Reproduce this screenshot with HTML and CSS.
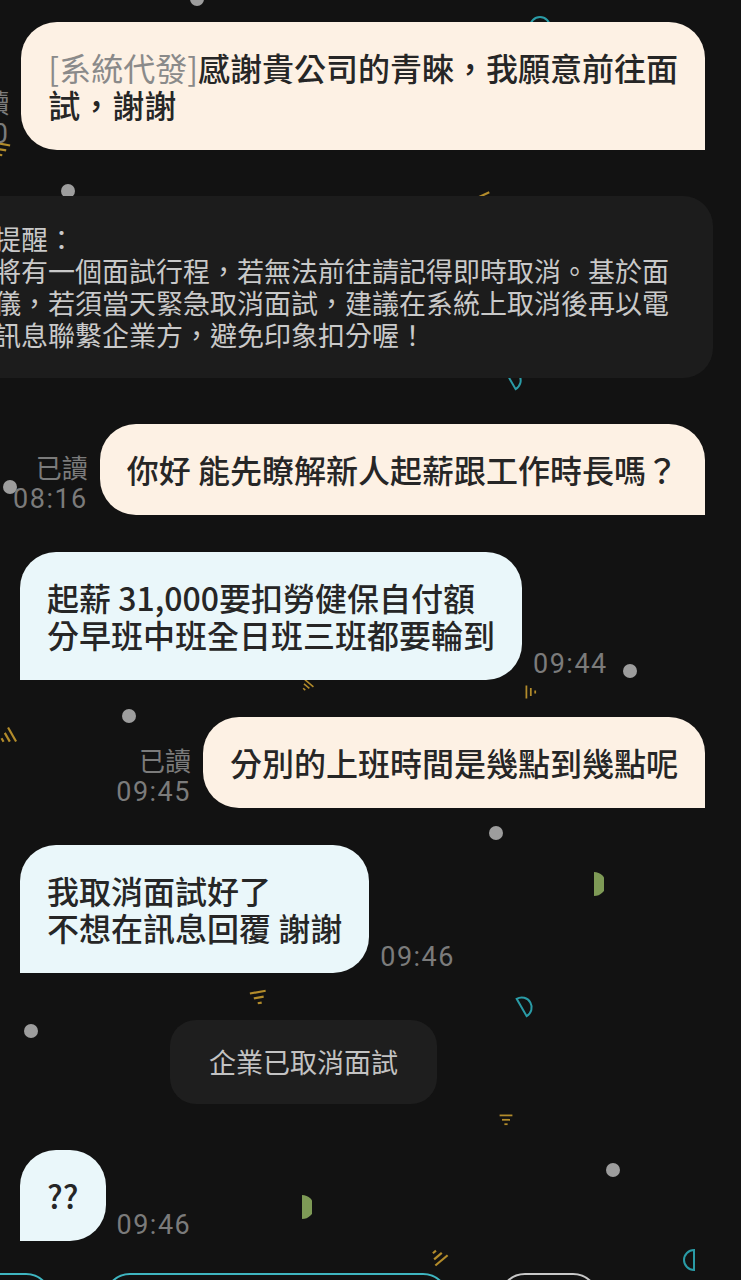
FILE: index.html
```html
<!DOCTYPE html>
<html lang="zh-Hant">
<head>
    <meta charset="UTF-8">
    <meta name="viewport" content="width=device-width, initial-scale=1.0">
    <title>聊天室</title>
    <link rel="stylesheet" href="styles.css">
</head>
<body>
    <!-- background confetti -->
    <div class="confetti">
        <div class="dot d1"></div>
        <div class="dot d2"></div>
        <div class="dot d3"></div>
        <div class="dot d4"></div>
        <div class="dot d5"></div>
        <div class="dot d6"></div>
        <div class="dot d7"></div>
        <div class="dot d8"></div>

        <svg class="tri t1" viewBox="0 0 20 20"><g><line x1="2" y1="3" x2="18" y2="3"/><line x1="5" y1="8.5" x2="15" y2="8.5"/><line x1="8" y1="14" x2="12" y2="14"/></g></svg>
        <svg class="tri t2" viewBox="0 0 20 20"><g><line x1="2" y1="3" x2="18" y2="3"/><line x1="5" y1="8.5" x2="15" y2="8.5"/><line x1="8" y1="14" x2="12" y2="14"/></g></svg>
        <svg class="tri t3" viewBox="0 0 20 20"><g><line x1="2" y1="3" x2="18" y2="3"/><line x1="5" y1="8.5" x2="15" y2="8.5"/><line x1="8" y1="14" x2="12" y2="14"/></g></svg>
        <svg class="tri t4" viewBox="0 0 20 20"><g><line x1="2" y1="3" x2="18" y2="3"/><line x1="5" y1="8.5" x2="15" y2="8.5"/><line x1="8" y1="14" x2="12" y2="14"/></g></svg>
        <svg class="tri t5" viewBox="0 0 20 20"><g><line x1="2" y1="3" x2="18" y2="3"/><line x1="5" y1="8.5" x2="15" y2="8.5"/><line x1="8" y1="14" x2="12" y2="14"/></g></svg>
        <svg class="tri t6" viewBox="0 0 20 20"><g><line x1="2" y1="3" x2="18" y2="3"/><line x1="5" y1="8.5" x2="15" y2="8.5"/><line x1="8" y1="14" x2="12" y2="14"/></g></svg>
        <svg class="tri t7" viewBox="0 0 20 20"><g><line x1="2" y1="3" x2="18" y2="3"/><line x1="5" y1="8.5" x2="15" y2="8.5"/><line x1="8" y1="14" x2="12" y2="14"/></g></svg>
        <svg class="tri t8" viewBox="0 0 20 20"><g><line x1="2" y1="3" x2="18" y2="3"/><line x1="5" y1="8.5" x2="15" y2="8.5"/><line x1="8" y1="14" x2="12" y2="14"/></g></svg>
        <svg class="tri t9" viewBox="0 0 20 20"><g><line x1="2" y1="3" x2="18" y2="3"/><line x1="5" y1="8.5" x2="15" y2="8.5"/><line x1="8" y1="14" x2="12" y2="14"/></g></svg>

        <svg class="moon s1" viewBox="0 0 14 24"><path d="M2 2 A10 10 0 0 1 2 22 Z"/></svg>
        <svg class="moon s2" viewBox="0 0 14 24"><path d="M2 2 A10 10 0 0 1 2 22 Z"/></svg>
        <svg class="moon s3" viewBox="0 0 14 24"><path d="M2 2 A10 10 0 0 1 2 22 Z"/></svg>
        <svg class="moon s4" viewBox="0 0 14 24"><path d="M2 2 A10 10 0 0 1 2 22 Z"/></svg>

        <svg class="half g1" viewBox="0 0 10 24"><path d="M0 0 A12 12 0 0 1 0 24 Z"/></svg>
        <svg class="half g2" viewBox="0 0 10 24"><path d="M0 0 A12 12 0 0 1 0 24 Z"/></svg>
    </div>

    <main class="chat">
        <div class="row sent">
            <div class="meta"><span>已讀</span><span class="time">09:40</span></div>
            <div class="bubble mine"><span class="sys-tag">[系統代發]</span>感謝貴公司的青睞，我願意前往面<br>試，謝謝</div>
        </div>

        <div class="notice">
            溫馨提醒：<br>
            您即將有一個面試行程，若無法前往請記得即時取消。基於面<br>試禮儀，若須當天緊急取消面試，建議在系統上取消後再以電<br>話或訊息聯繫企業方，避免印象扣分喔！
        </div>

        <div class="row sent">
            <div class="meta"><span>已讀</span><span class="time">08:16</span></div>
            <div class="bubble mine">你好 能先瞭解新人起薪跟工作時長嗎？</div>
        </div>

        <div class="row received">
            <div class="bubble theirs">起薪 31,000要扣勞健保自付額<br>分早班中班全日班三班都要輪到</div>
            <div class="meta"><span class="time">09:44</span></div>
        </div>

        <div class="row sent">
            <div class="meta"><span>已讀</span><span class="time">09:45</span></div>
            <div class="bubble mine">分別的上班時間是幾點到幾點呢</div>
        </div>

        <div class="row received">
            <div class="bubble theirs">我取消面試好了<br>不想在訊息回覆 謝謝</div>
            <div class="meta"><span class="time">09:46</span></div>
        </div>

        <div class="pill">企業已取消面試</div>

        <div class="row received">
            <div class="bubble theirs">??</div>
            <div class="meta"><span class="time">09:46</span></div>
        </div>

        <div class="actions">
            <div class="action teal small"></div>
            <div class="action teal wide"></div>
            <div class="action grey small"></div>
        </div>
    </main>
</body>
</html>
```

FILE: styles.css
```css
body {
    margin: 0;
    height: 1280px;
    position: relative;
    overflow: hidden;
    background-color: #121212;
    font-family: "Noto Sans CJK TC", "Noto Sans", sans-serif;
    color: #262626;
}

/* Confetti layer */
.confetti {
    position: absolute;
    top: 0;
    left: 0;
    width: 100%;
    height: 100%;
    z-index: 0;
}

.confetti > * {
    position: absolute;
}

.dot {
    width: 14px;
    height: 14px;
    border-radius: 50%;
    background-color: #9d9d9d;
}

.d1 { left: 190px; top: -8px; }
.d2 { left: 61px; top: 184px; }
.d3 { left: 3px; top: 480px; }
.d4 { left: 623px; top: 664px; }
.d5 { left: 122px; top: 709px; }
.d6 { left: 489px; top: 826px; }
.d7 { left: 24px; top: 1024px; }
.d8 { left: 606px; top: 1163px; }

.tri {
    width: 20px;
    height: 20px;
}

.tri line {
    stroke: #b38c2b;
    stroke-width: 2.2;
}

.t1 { left: 475px; top: 192px; transform: rotate(-25deg); }
.t2 { left: -9px; top: 141px; transform: rotate(10deg); }
.t3 { left: 296px; top: 677px; transform: rotate(40deg) scale(0.7); }
.t4 { left: 522px; top: 682px; transform: rotate(-90deg) scale(0.8); }
.t5 { left: -4px; top: 728px; transform: rotate(60deg); }
.t6 { left: 249px; top: 989px; transform: rotate(-10deg); }
.t7 { left: 496px; top: 1111px; transform: scale(0.8); }
.t8 { left: 427px; top: 1245px; transform: rotate(140deg); }
.t9 { left: 549px; top: 211px; transform: scale(0.6); opacity: 0.45; }

.moon {
    width: 14px;
    height: 24px;
}

.moon path {
    fill: none;
    stroke: #2a9ba6;
    stroke-width: 2;
}

.s1 { left: 533px; top: 10px; transform: rotate(-90deg); }
.s2 { left: 508px; top: 366px; transform: rotate(-30deg); }
.s3 { left: 519px; top: 993px; transform: rotate(-30deg); }
.s4 { left: 682px; top: 1248px; transform: rotate(180deg); }

.half {
    width: 10px;
    height: 24px;
}

.half path {
    fill: #7e9a56;
}

.g1 { left: 594px; top: 872px; }
.g2 { left: 302px; top: 1195px; }

/* Chat column */
.chat {
    position: relative;
    z-index: 1;
    display: flex;
    flex-direction: column;
    padding: 22px 36px 0 20px;
}

.row {
    display: flex;
    align-items: flex-end;
    margin-bottom: 37px;
}

.row.sent {
    justify-content: flex-end;
    gap: 12px;
}

.row.received {
    justify-content: flex-start;
    gap: 11px;
}

.bubble {
    flex-shrink: 0;
    padding: 27px 27px;
    font-size: 32px;
    line-height: 37px;
    font-weight: 500;
    white-space: nowrap;
    border-radius: 36px;
}

.bubble.mine {
    background-color: #fdf1e4;
    border-bottom-right-radius: 0;
}

.bubble.theirs {
    background-color: #eaf7fa;
    border-bottom-left-radius: 0;
}

.sys-tag {
    color: #8a8a8a;
    font-weight: 400;
}

.meta {
    flex-shrink: 0;
    display: flex;
    flex-direction: column;
    align-items: flex-end;
    color: #7b7b7b;
    font-size: 26px;
    line-height: 32px;
}

.time {
    font-family: Roboto, "Noto Sans", sans-serif;
    font-size: 27px;
    letter-spacing: 1.5px;
}

/* System messages */
.notice {
    margin: 9px -8px 46px -108px;
    padding: 27px 28px;
    background-color: #1c1c1c;
    border-radius: 30px;
    color: #c9c9c9;
    font-size: 27px;
    line-height: 32px;
    white-space: nowrap;
}

.pill {
    align-self: flex-start;
    margin: 10px 0 46px 150px;
    padding: 26px 39px;
    background-color: #1e1e1e;
    border-radius: 26px;
    color: #c3c3c3;
    font-size: 27px;
    line-height: 32px;
}

/* Bottom buttons, mostly off screen */
.actions {
    display: flex;
    gap: 52px;
    margin: -5px 0 0 -68px;
}

.action {
    height: 52px;
    border: 2px solid #3fb6c1;
    border-radius: 26px;
    box-sizing: border-box;
}

.action.small {
    width: 100px;
}

.action.wide {
    width: 345px;
}

.action.grey {
    border-color: #c8c8c8;
    margin-left: -2px;
}
```
